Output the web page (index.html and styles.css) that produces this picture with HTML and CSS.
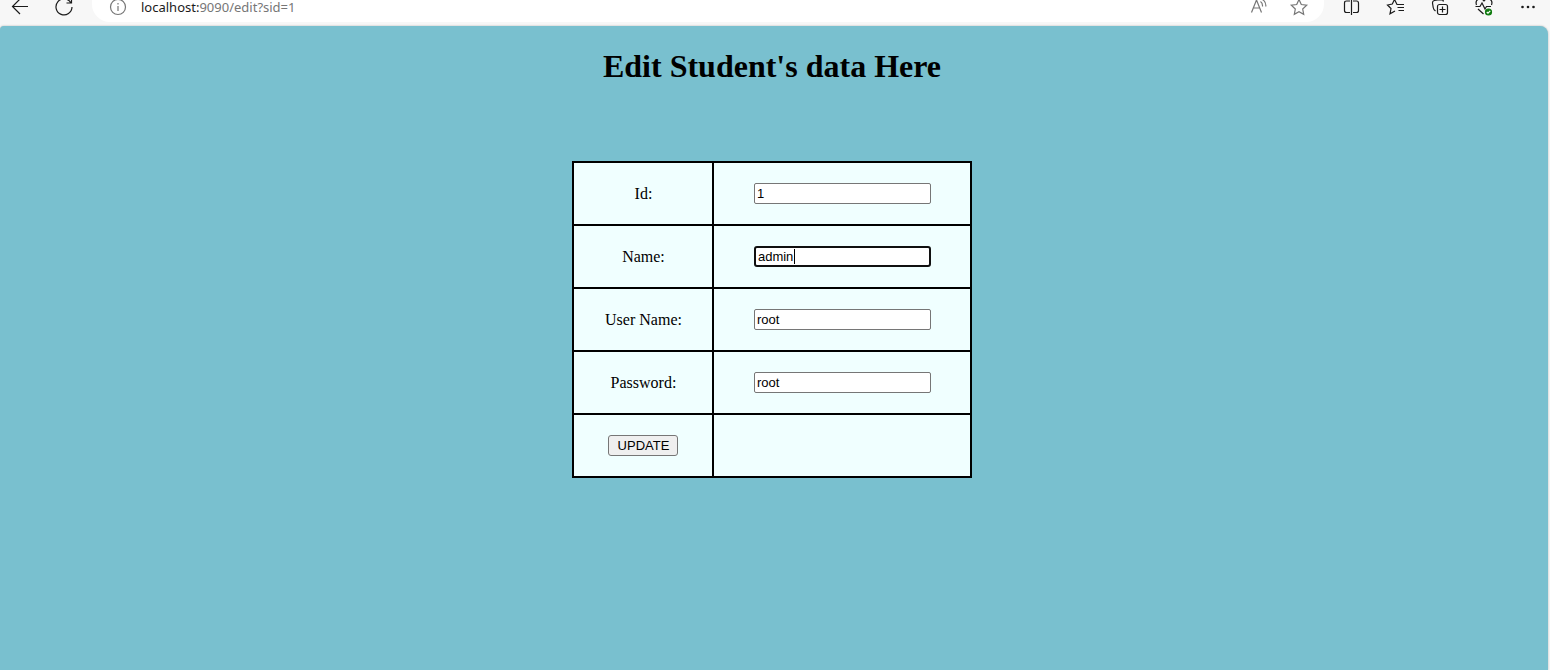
FILE: index.html
```html
<!DOCTYPE html>
<html lang="en">
<head>
<meta charset="utf-8">
<title>Edit Student</title>
<link rel="stylesheet" href="styles.css">
</head>
<body>
<header class="toolbar">
  <button class="tool" type="button" aria-label="Back"><svg viewBox="0 0 20 20"><path d="M18 9.500H3M10 2L2.500 9.500L10 17"/></svg></button>
  <button class="tool" type="button" aria-label="Refresh"><svg viewBox="0 0 20 20"><path d="M17 6A8 8 0 1 0 18 10M17.500 1V6H12.500"/></svg></button>
  <div class="address">
    <button class="tool muted" type="button" aria-label="Site information"><svg viewBox="0 0 20 20"><circle cx="10" cy="10" r="7.500"/><path d="M10 9V14M10 6V7.500"/></svg></button>
    <span class="url"><span class="host">localhost:</span>9090/edit?sid=1</span>
    <button class="tool muted" type="button" aria-label="Read aloud"><svg viewBox="0 0 20 20"><path d="M2.500 15.500L7.500 3L12.500 15.500M4.300 11H10.700M11.500 4.500Q13.800 6 13.500 9.500M13.500 2.500Q17.300 5 16.800 9.500"/></svg></button>
    <button class="tool muted" type="button" aria-label="Add to favorites"><svg viewBox="0 0 20 20"><path d="M10 2.500L12.300 7.500L17.700 8.200L13.700 12L14.700 17.300L10 14.700L5.300 17.300L6.300 12L2.300 8.200L7.700 7.500Z"/></svg></button>
  </div>
  <div class="actions">
    <button class="tool" type="button" aria-label="Split screen"><svg viewBox="0 0 20 20"><path d="M8 4H4.500Q2.500 4 2.500 6V13.500Q2.500 15.500 4.500 15.500H8M11 4H14.500Q16.500 4 16.500 6V13.500Q16.500 15.500 14.500 15.500H11M9.500 2V18"/></svg></button>
    <button class="tool" type="button" aria-label="Favorites"><svg viewBox="0 0 20 20"><path d="M13.500 7.500H11L8.500 2.500L6.300 7L1.500 8L5 11.500L4 16.800L9 14M11.500 7.500H18M11.500 10.500H18M12.500 13.500H18"/></svg></button>
    <button class="tool" type="button" aria-label="Collections"><svg viewBox="0 0 20 20"><rect x="7.500" y="7.500" width="10" height="10" rx="2"/><path d="M12.500 9.500V15.500M9.500 12.500H15.500M5.500 14Q3.500 12.500 3.200 10.500L2.500 6Q2.300 4 4.500 3.500L11 2.500Q13 2.500 13.500 4.500"/></svg></button>
    <button class="tool" type="button" aria-label="Browser essentials"><svg viewBox="0 0 20 20"><path d="M2.500 8C.5 2 7 0 10 4C13 0 19.500 2 17.500 8M1.500 9.500H6L8 6L11 12L12.500 9.500H17M4 12L9.500 17"/><circle class="badge" cx="14.500" cy="15" r="3"/><path class="tick" d="M12.800 15L14 16.200L16.300 13.800"/></svg></button>
    <button class="tool" type="button" aria-label="Settings and more"><svg viewBox="0 0 20 20"><g class="dots"><circle cx="4.500" cy="10" r="1.300"/><circle cx="10" cy="10" r="1.300"/><circle cx="15.500" cy="10" r="1.300"/></g></svg></button>
  </div>
</header>
<main class="page">
  <h1 class="title">Edit Student's data Here</h1>
  <form class="form">
    <table class="grid">
      <tr><th><label for="sid">Id:</label></th><td><input class="field" id="sid" type="text" value="1"></td></tr>
      <tr><th><label for="name">Name:</label></th><td><div class="editing"><input class="field active" id="name" type="text" value="admin"><span class="caret"></span></div></td></tr>
      <tr><th><label for="user">User Name:</label></th><td><input class="field" id="user" type="text" value="root"></td></tr>
      <tr><th><label for="password">Password:</label></th><td><input class="field" id="password" type="text" value="root"></td></tr>
      <tr><th><button class="update" type="submit">UPDATE</button></th><td></td></tr>
    </table>
  </form>
</main>
</body>
</html>
```
FILE: styles.css
```css
* { box-sizing: border-box; }
html, body { height: 100%; }
body {
  margin: 0;
  display: flex;
  flex-direction: column;
  background: #f7f7f7;
  color: #000;
  font-family: "Liberation Serif", "Times New Roman", serif;
  font-size: 16px;
  overflow: hidden;
}
.toolbar {
  display: flex;
  align-items: flex-start;
  height: 26px;
  padding: 0 12px 0 10px;
  gap: 24px;
}
.tool {
  display: block;
  flex: none;
  width: 20px;
  height: 20px;
  margin-top: -3px;
  padding: 0;
  border: 0;
  background: none;
  color: #1b1b1b;
}
.tool svg {
  display: block;
  width: 20px;
  height: 20px;
  fill: none;
  stroke: currentColor;
  stroke-width: 1.2;
}
.muted { color: #767676; }
.tool .dots { fill: currentColor; stroke: none; }
.tool .badge { fill: #107c10; stroke: #107c10; }
.tool .tick { stroke: #fff; }
.address {
  display: flex;
  flex: 1;
  align-items: flex-start;
  height: 22px;
  margin-left: -6px;
  padding: 0 15px 0 16px;
  gap: 20px;
  border-radius: 0 0 18px 18px;
  background: #fff;
}
.address .muted:first-child { margin-right: -7px; }
.url {
  flex: 1;
  margin-top: -2px;
  color: #767676;
  font: 13px/18px "Noto Sans", "Open Sans", sans-serif;
}
.host { color: #1b1b1b; }
.actions { display: flex; gap: 24px; margin-left: -6px; }
.page {
  flex: 1;
  margin-right: 2px;
  padding: 22px 4px 0 0;
  border-radius: 4px 8px 0 0;
  background: #79c0cf;
  box-shadow: 0 0 2px #aaa;
}
.title {
  margin: 0 0 76px;
  text-align: center;
  font-size: 32px;
  line-height: 37px;
}
.grid {
  margin: 0 auto;
  border-collapse: collapse;
  background: azure;
}
.grid th, .grid td {
  height: 63px;
  padding: 20px 39px 20px 40px;
  border: 2px solid #000;
  text-align: center;
  font-weight: 400;
  line-height: 18px;
}
.grid th { padding: 20px 30px 20px 31px; }
.field {
  display: block;
  width: 177px;
  height: 21px;
  padding: 1px 2px;
  border: 1px solid #767676;
  border-radius: 2px;
  background: #fff;
  color: #000;
  font: 13px "Liberation Sans", Arial, sans-serif;
}
.active {
  padding: 0 2px;
  border: 2px solid #101010;
  border-radius: 3px;
}
.editing { position: relative; }
.caret {
  position: absolute;
  top: 3px;
  left: 40px;
  width: 1px;
  height: 15px;
  background: #000;
}
.update {
  display: block;
  width: 70px;
  height: 21px;
  margin: 0 auto;
  padding: 0;
  border: 1px solid #767676;
  border-radius: 3px;
  background: #efefef;
  color: #000;
  font: 13px "Liberation Sans", Arial, sans-serif;
}
```
